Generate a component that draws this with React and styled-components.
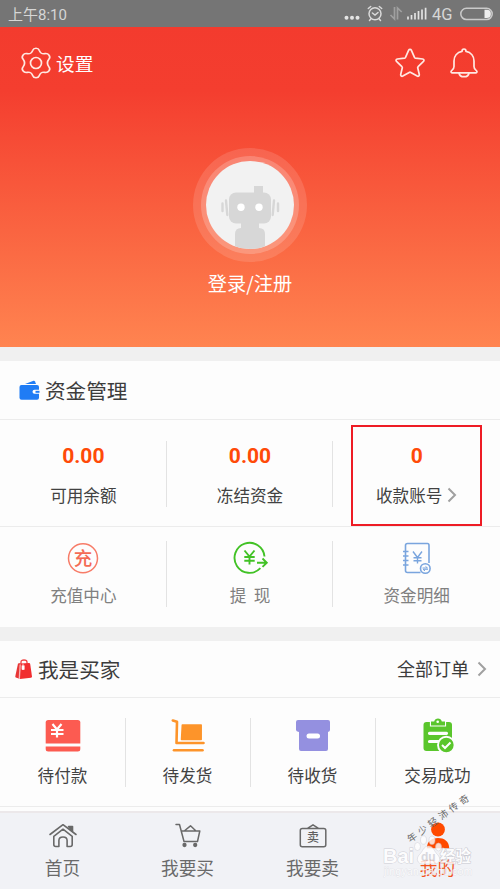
import React from 'react';
import styled, {createGlobalStyle} from 'styled-components';

const GlobalStyle = createGlobalStyle`
  * {
    box-sizing: border-box;
  }
  body {
    margin: 0;
    background: #fdfdfd;
    font-family: 'Noto Sans CJK SC', 'Noto Sans', sans-serif;
  }
  svg {
    display: block;
    flex: none;
    overflow: visible;
  }
`;

const Page = styled.div`
  position: relative;
  display: flex;
  flex-direction: column;
  width: 500px;
  height: 889px;
  overflow: hidden;
  background: #fdfdfd;
`;
const StatusBar = styled.div`
  display: flex;
  justify-content: space-between;
  align-items: center;
  flex: none;
  height: 27px;
  padding: 2px 6px 0 8px;
  background: #757575;
  color: #d6d6d6;
  line-height: 24px;
`;
const Clock = styled.span`
  font-family: Roboto, 'Noto Sans CJK SC', sans-serif;
  font-size: 15px;
  font-weight: 400;
`;
const StatusIcons = styled.div`
  display: flex;
  align-items: center;
`;
const Network = styled.span`
  width: 23px;
  margin: 0 5px 0 3px;
  font-family: Roboto, sans-serif;
  font-size: 16.5px;
`;
const Hero = styled.header`
  display: flex;
  flex-direction: column;
  align-items: center;
  flex: none;
  height: 320px;
  padding: 19px 20px 0;
  background: linear-gradient(#f33b2e 0%, #f43e2f 20%, #ff8450 100%);
  color: #fff;
`;
const HeroBar = styled.div`
  display: flex;
  align-items: center;
  width: 100%;
  height: 34px;
`;
const Settings = styled.span`
  flex: 1;
  margin-left: 4px;
  font-size: 18.7px;
  line-height: 28px;
`;
const HeroIcons = styled.div`
  display: flex;
  align-items: center;
  gap: 22px;
`;
const AvatarRing = styled.div`
  display: flex;
  align-items: center;
  justify-content: center;
  width: ${({$size}) => $size}px;
  height: ${({$size}) => $size}px;
  border-radius: 50%;
  background: rgba(255, 255, 255, ${({$alpha}) => $alpha});
`;
const Avatar = styled.div`
  width: 88px;
  height: 88px;
  border-radius: 50%;
  overflow: hidden;
  background: #f2f2f2;
`;
const AvatarSlot = styled.div`
  margin-top: 68px;
`;
const Login = styled.span`
  margin-top: 8px;
  font-size: 19.2px;
  line-height: 26px;
`;
const Gap = styled.div`
  flex: none;
  height: 14px;
  background: #f0f0f0;
`;
const SectionTitle = styled.div`
  display: flex;
  align-items: center;
  flex: none;
  height: ${({$height}) => $height}px;
  padding: 0 13px 0 ${({$left}) => $left}px;
  border-bottom: 1px solid #ececec;
  color: #3c3c3c;
`;
const Heading = styled.h2`
  flex: 1;
  margin: 0 0 0 5px;
  font-size: 20.6px;
  font-weight: 400;
  line-height: 30px;
`;
const MoreLink = styled.span`
  margin: -3px 8px 0 0;
  font-size: 18px;
  line-height: 28px;
`;
const Row = styled.div`
  display: grid;
  grid-template-columns: repeat(${({$columns}) => $columns}, 1fr);
  flex: none;
  height: ${({$height}) => $height}px;
  padding: ${({$padding}) => $padding};
  border-bottom: ${({$line}) => ($line ? '1px solid #ececec' : 'none')};
`;
const Cell = styled.div`
  display: flex;
  flex-direction: column;
  align-items: center;
  box-shadow: -1px 0 #e3e3e3;

  &:first-child {
    box-shadow: none;
  }
`;
const OrderCell = styled(Cell)`
  box-shadow: inset 1px 0 #e3e3e3;
`;
const Amount = styled.span`
  margin-top: 2px;
  color: #ff4a08;
  font-family: Roboto, sans-serif;
  font-size: 21px;
  font-weight: 700;
  line-height: 27px;
`;
const Label = styled.span`
  display: flex;
  align-items: center;
  gap: 5px;
  margin-top: ${({$top}) => $top}px;
  color: ${({$soft}) => ($soft ? '#808080' : '#424242')};
  font-size: 16.6px;
  line-height: 24px;
  white-space: pre;
`;
const Highlight = styled.div`
  position: absolute;
  left: 351px;
  top: 425px;
  width: 131px;
  height: 101px;
  border: 2.5px solid #ee1c25;
`;
const TabBar = styled.nav`
  display: grid;
  grid-template-columns: repeat(4, 1fr);
  flex: none;
  height: 78px;
  margin-top: 4px;
  border-top: 2px solid #ece8ea;
  background: #f1f2f6;
`;
const Tab = styled.div`
  display: flex;
  flex-direction: column;
  align-items: center;
  padding-top: 10px;
  color: ${({$active}) => ($active ? '#f4521c' : '#6a6a6a')};
  font-size: 17.7px;
  line-height: 26px;

  svg {
    margin-bottom: 5px;
  }
`;
const BrandMark = styled.div`
  position: absolute;
  left: 383px;
  top: 832px;
  opacity: 0.8;
`;
const Signature = styled.div`
  position: absolute;
  left: 400px;
  top: 808px;
  width: 84px;
  color: #666;
  font-size: 9.5px;
  letter-spacing: 3.3px;
  line-height: 14px;
  white-space: nowrap;
  transform: rotate(-36deg);
`;

const Chevron = () => (
  <svg width="10" height="16" viewBox="0 0 10 16" fill="none" stroke="#a0a0a0" strokeWidth="2">
    <path d="M1.500 1.500 8 8l-6.500 6.500" />
  </svg>
);

const StatusGlyphs = () => (
  <svg width="45" height="20" viewBox="0 0 45 20" fill="none">
    <g fill="#e4e4e4">
      <circle cx="2.500" cy="12.800" r="2" />
      <circle cx="8" cy="12.800" r="2" />
      <circle cx="13.500" cy="12.800" r="2" />
    </g>
    <g stroke="#dadada" strokeWidth="1.500" strokeLinecap="round">
      <circle cx="31" cy="8.800" r="6" />
      <path d="M28.400 8 31 10l3-2.500M24.300 3.500l2.400-2M37.700 3.500l-2.400-2M27 13.800l-1.500 1.700M35 13.800l1.500 1.700" />
    </g>
  </svg>
);

const SignalGlyphs = () => (
  <svg width="40" height="20" viewBox="0 0 40 20">
    <g fill="none" stroke="#a0a0a0" strokeWidth="1.700">
      <path d="M5.500 2v12L1.500 10M8.500 14.500V3l4.200 4" />
    </g>
    <path
      d="M19 14.500v-3M22.500 14.500v-4.500M26 14.500V8M29.500 14.500V6M33 14.500V4.500M36.600 14.500V2.800"
      stroke="#e2e2e2"
      strokeWidth="1.700"
    />
  </svg>
);

const Battery = () => (
  <svg width="34" height="13" viewBox="0 0 34 13">
    <rect x=".8" y=".3" width="31.400" height="11.200" rx="5.600" fill="none" stroke="#cacaca" strokeWidth="1.500" />
    <path d="M24.500 1.800h2.300a4.100 4.100 0 0 1 0 8.200h-2.300z" fill="#eee" />
  </svg>
);

const GearIcon = () => (
  <svg width="32" height="32" viewBox="0 0 32 32" fill="none" stroke="#ffe8e2" strokeWidth="1.700">
    <path
      d="M12.800 3.200C13.700.6 18.300.6 19.200 3.200C20.500 6.500 21.800 7.200 25 6.600C28.500 6 31 9.600 29 12C26.800 14.800 26.800 17.200 29 20C31 22.400 28.500 26 25 25.400C21.800 24.800 20.500 25.500 19.200 28.800C18.300 31.400 13.700 31.400 12.800 28.800C11.500 25.500 10.200 24.800 7 25.400C3.500 26 1 22.400 3 20C5.200 17.200 5.200 14.800 3 12C1 9.600 3.500 6 7 6.600C10.200 7.200 11.500 6.500 12.800 3.200Z"
      strokeLinejoin="round"
    />
    <circle cx="16" cy="16" r="5.500" />
  </svg>
);

const StarIcon = () => (
  <svg width="32" height="32" viewBox="0 0 32 32" fill="none" stroke="#ffe8e2" strokeWidth="1.700" strokeLinejoin="round">
    <path d="M14.700 3.200c.5-1.100 2.100-1.100 2.600 0l3.200 7.200c.2.400.5.600.9.700l7.300.9c1.300.2 1.700 1.600.8 2.400l-5.400 5.200c-.4.300-.5.700-.4 1.200l1.600 6.700c.3 1.300-1 2.200-2.100 1.600l-6.400-3.700c-.5-.3-1.100-.3-1.600 0l-6.400 3.700c-1.100.6-2.400-.3-2.100-1.600l1.600-6.700c.1-.5 0-.9-.4-1.200l-5.400-5.200c-.9-.8-.5-2.200.8-2.400l7.300-.9c.4-.1.700-.3.900-.7z" />
  </svg>
);

const BellIcon = () => (
  <svg width="32" height="32" viewBox="0 0 32 32" fill="none" stroke="#ffe8e2" strokeWidth="1.700" strokeLinejoin="round">
    <path d="M14 4.400c0-3.200 4-3.200 4 0c5 1 8 5 8 9.600v5.500c0 2.200 1.200 2.800 2.700 4.500c.8 1-.1 1.800-1 1.800H4.300c-.9 0-1.800-.8-1-1.800C4.800 22.300 6 21.700 6 19.500V14c0-4.600 3-8.600 8-9.600Z" />
    <path d="M11 25.800c.5 5.200 9.500 5.200 10 0" />
  </svg>
);

const Robot = () => (
  <svg width="88" height="88" viewBox="0 0 88 88">
    <g fill="#d7d7d7">
      <path d="M48 25h9v8h-9z" />
      <rect x="23" y="31.500" width="42" height="31" rx="7" />
      <path d="M35 60h18v8H35z" />
      <path d="M29 90V73q0-6 6-6h18q6 0 6 6v17z" />
    </g>
    <path
      d="M20 39.500 21.300 54M16.500 42.500v7.500M68 39.500 66.700 54M72 42.500v7.500"
      stroke="#d7d7d7"
      strokeWidth="2.400"
      strokeLinecap="round"
    />
    <circle cx="35" cy="46.300" r="3.700" fill="#fff" />
    <circle cx="53" cy="46.300" r="3.700" fill="#fff" />
  </svg>
);

const WalletIcon = () => (
  <svg width="21" height="20" viewBox="0 0 21 20" fill="#1f7cf5">
    <path d="M6 4 14.500.8q1-.3 1.500.6l1 2.600z" />
    <rect x=".5" y="5" width="19.500" height="14.800" rx="2" />
    <path d="M20.500 9.800h-5a2 2 0 0 0 0 4h5z" fill="#fff" />
    <path d="M16.500 10.800h4v2h-4z" />
  </svg>
);

const BagIcon = () => (
  <svg width="18" height="20" viewBox="0 0 18 20">
    <path d="M6 5.500V3q0-2 3-2t3 2v2" fill="none" stroke="#ef4545" strokeWidth="1.300" />
    <path d="M3 4.500 5.500 4 4.500 19.800.8 18.500q-.7-.3-.5-1.300z" fill="#e83636" />
    <path d="M5.500 4.500 14 4q1 0 1.200 1L17 17.500q.1 1-1 1.200L5 20z" fill="#f12e30" />
    <path d="M5 5.500 4.200 19" stroke="#fff" strokeWidth=".6" />
    <path d="M7 6.500v4h2.200v-4M8 4.800V7" fill="#fff" stroke="#fff" strokeWidth=".7" />
  </svg>
);

const RechargeIcon = () => (
  <svg width="32" height="32" viewBox="0 0 32 32">
    <circle cx="16" cy="16.300" r="14.500" fill="none" stroke="#f77c68" strokeWidth="1.500" />
    <text x="16" y="22.800" textAnchor="middle" fontSize="18.500" fontWeight="500" fill="#f46b55">
      充
    </text>
  </svg>
);

const WithdrawIcon = () => (
  <svg width="36" height="34" viewBox="0 0 36 34" fill="none" stroke="#42c226" strokeWidth="1.900">
    <path d="M32.500 15.500A15 15 0 1 0 28.400 27.200" />
    <path d="M25 21.700h9.500M30.500 17.500l4.300 4.200-4.300 4.200" />
    <path d="M12.500 9.500 17.500 15.500 22.500 9.500M17.500 15.500V23.500M12.300 16h10.400M12.300 19.700h10.400" />
  </svg>
);

const LedgerIcon = () => (
  <svg width="28" height="32" viewBox="0 0 28 32" fill="none" stroke="#7aa5de" strokeWidth="1.600">
    <path d="M17.500 30.500H4.500q-2 0-2-2v-25q0-2 2-2h20q1.500 0 1.500 2V21" />
    <path d="M0 9.500h5.500M0 14h5.500M0 18.500h5.500M0 23h5.500" strokeWidth="1.500" />
    <path d="M10 9.500l4.500 6 4.500-6M14.500 15.500v6M10.500 15.700h8M10.500 18.700h8" strokeWidth="1.400" />
    <circle cx="22.300" cy="26.500" r="4.800" />
    <path d="M19.500 26h5l-2-1.600M25 27.300h-5l2 1.600" strokeWidth="1" />
  </svg>
);

const CardIcon = () => (
  <svg width="36" height="34" viewBox="0 0 36 34" fill="#fc5b51">
    <path d="M.7 24.500V3.500q0-2.500 2.500-2.500h29.600q2.500 0 2.500 2.500v21z" />
    <path d="M.7 27.500h34.600v2.500q0 2.500-2.500 2.500H3.200q-2.500 0-2.500-2.500z" />
    <path
      d="M7.500 5 12 10.500 16.500 5M12 10.500V18.500M6 11h12.500M6 15h12.500"
      fill="none"
      stroke="#fff"
      strokeWidth="2.200"
    />
  </svg>
);

const TrolleyIcon = () => (
  <svg width="34" height="34" viewBox="0 0 34 34" fill="none" stroke="#fd942a" strokeWidth="2.600" strokeLinecap="round" strokeLinejoin="round">
    <path d="M1.800 1.500 6 2.800 5.500 24H32.500" />
    <path d="M3 31.200h28.500" />
    <path d="M11.300 6h18.900v14.500H10.500z" fill="#fd942a" strokeWidth="1.500" />
  </svg>
);

const BoxIcon = () => (
  <svg width="34" height="34" viewBox="0 0 34 34">
    <path
      d="M2 1h30q2 0 2 2v8q0 1.500-2 2v17q0 2-2 2H5q-2 0-2-2V13q-3-.5-3-2V3q0-2 2-2z"
      fill="#9490e0"
    />
    <rect x="10.500" y="14.500" width="13.500" height="5" rx="2.500" fill="#fff" />
  </svg>
);

const DoneIcon = () => (
  <svg width="32" height="36" viewBox="0 0 32 36">
    <rect x="1.500" y="4" width="28.500" height="29" rx="3" fill="#5ac62c" />
    <path
      d="M9 3.500h3.200c.6-4 7-4 7.600 0H23v4H9z"
      fill="#5ac62c"
      stroke="#fdfdfd"
      strokeWidth="2.200"
      paintOrder="stroke"
    />
    <circle cx="15.700" cy="3.700" r="1.300" fill="#fff" />
    <path d="M7.500 15.300h17M7.500 23.500h9" stroke="#fdfdfd" strokeWidth="3.200" strokeLinecap="round" />
    <circle cx="24.300" cy="27" r="8.300" fill="#5ac62c" stroke="#fdfdfd" strokeWidth="1.900" />
    <path d="m20 27 3 3 5.500-5.500" fill="none" stroke="#fff" strokeWidth="2" />
  </svg>
);

const HomeIcon = () => (
  <svg width="28" height="26" viewBox="0 0 28 26" fill="none" stroke="#696969" strokeWidth="1.600" strokeLinejoin="round" strokeLinecap="round">
    <path d="M1 11.500 14 1.700 27 11.500" />
    <path d="M19.500 3.500h4v5z" fill="#696969" />
    <path d="M4.800 13.300V21.500q0 2 2 2h3.100v-6q0-3.500 4.100-3.500t4.100 3.500v6h3.100q2 0 2-2v-8.200L14 6.200z" />
  </svg>
);

const CartIcon = () => (
  <svg width="26" height="26" viewBox="0 0 26 26" fill="none" stroke="#696969" strokeWidth="1.500" strokeLinejoin="round" strokeLinecap="round">
    <path d="M1 1.500h3.500L9 18.500h13.500L24.800 8H6.500M9.800 7.500l5.700-4.700 5 4.700" />
    <circle cx="9.500" cy="22" r="1.400" fill="#696969" />
    <circle cx="20.200" cy="22" r="1.400" fill="#696969" />
  </svg>
);

const SellIcon = () => (
  <svg width="28" height="26" viewBox="0 0 28 26">
    <path
      d="M3.300 5.500h21.500q2 0 2 2v14.300q0 2-2 2H3.300q-2 0-2-2V7.500q0-2 2-2zM8.500 5.300 14 1.800l5.500 3.500"
      fill="none"
      stroke="#696969"
      strokeWidth="1.500"
    />
    <text x="14" y="18.800" textAnchor="middle" fontSize="12" fontWeight="500" fill="#606060">
      卖
    </text>
  </svg>
);

const MineIcon = () => (
  <svg width="24" height="26" viewBox="0 0 24 26" fill="#ff4a00">
    <circle cx="12" cy="6.500" r="6.900" />
    <path d="M.8 25.200C1 18 6 15 12 15s11 3 11.200 10.200z" />
  </svg>
);

const BaiduMark = () => (
  <svg width="94" height="50" viewBox="0 0 94 50">
    <g fill="#fff" stroke="#cfcfd6" strokeWidth=".6">
      <ellipse cx="34.500" cy="14.500" rx="3" ry="4" />
      <ellipse cx="40.500" cy="8" rx="3" ry="4.200" />
      <ellipse cx="49" cy="8.300" rx="3" ry="4.200" />
      <ellipse cx="55.500" cy="15" rx="3" ry="4" />
      <path d="M45.500 14c5 0 6 6 9 8.500c4 4 2 9.500-3 9.500h-12c-5 0-7-5.500-3-9.500c3-2.500 4-8.500 9-8.500z" />
    </g>
    <text
      x="0"
      y="31"
      fontFamily="Liberation Sans, sans-serif"
      fontSize="20"
      fontWeight="700"
      fill="#fff"
      stroke="#c4c4cc"
      strokeWidth=".9"
      paintOrder="stroke"
      textLength="31"
    >
      Bai
    </text>
    <text x="38" y="29" fontFamily="Liberation Sans, sans-serif" fontSize="12" fontWeight="700" fill="#d2d2d8">
      du
    </text>
    <text x="57" y="30" fontSize="15.500" fontWeight="700" fill="#fff" stroke="#c0c0c8" strokeWidth="1" paintOrder="stroke">
      经验
    </text>
    <text
      x="1"
      y="43"
      fontFamily="Liberation Sans, sans-serif"
      fontSize="10"
      fill="#fff"
      stroke="#d6d6dc"
      strokeWidth=".6"
      paintOrder="stroke"
      textLength="88"
    >
      jingyan.baidu.com
    </text>
  </svg>
);

const services = [
  {label: '充值中心', Icon: RechargeIcon},
  {label: '提  现', Icon: WithdrawIcon},
  {label: '资金明细', Icon: LedgerIcon},
];

const orders = [
  {label: '待付款', Icon: CardIcon},
  {label: '待发货', Icon: TrolleyIcon},
  {label: '待收货', Icon: BoxIcon},
  {label: '交易成功', Icon: DoneIcon},
];

const tabs = [
  {label: '首页', Icon: HomeIcon},
  {label: '我要买', Icon: CartIcon},
  {label: '我要卖', Icon: SellIcon},
  {label: '我的', Icon: MineIcon, active: true},
];

const IconSlot = styled.div`
  display: flex;
  align-items: center;
  height: ${({$height}) => $height}px;
`;

function App() {
  return (
    <Page>
      <GlobalStyle />
      <StatusBar>
        <Clock>上午8:10</Clock>
        <StatusIcons>
          <StatusGlyphs />
          <SignalGlyphs />
          <Network>4G</Network>
          <Battery />
        </StatusIcons>
      </StatusBar>
      <Hero>
        <HeroBar>
          <GearIcon />
          <Settings>设置</Settings>
          <HeroIcons>
            <StarIcon />
            <BellIcon />
          </HeroIcons>
        </HeroBar>
        <AvatarSlot>
          <AvatarRing $size={114} $alpha={0.13}>
            <AvatarRing $size={98} $alpha={0.2}>
              <Avatar>
                <Robot />
              </Avatar>
            </AvatarRing>
          </AvatarRing>
        </AvatarSlot>
        <Login>登录/注册</Login>
      </Hero>
      <Gap />
      <SectionTitle $height={59} $left={19}>
        <WalletIcon />
        <Heading>资金管理</Heading>
      </SectionTitle>
      <Row $columns={3} $height={107} $padding="21px 0" $line>
        <Cell>
          <Amount>0.00</Amount>
          <Label $top={13}>可用余额</Label>
        </Cell>
        <Cell>
          <Amount>0.00</Amount>
          <Label $top={13}>冻结资金</Label>
        </Cell>
        <Cell>
          <Amount>0</Amount>
          <Label $top={13}>
            收款账号
            <Chevron />
          </Label>
        </Cell>
      </Row>
      <Row $columns={3} $height={100} $padding="14px 0 21px">
        {services.map(({label, Icon}) => (
          <Cell key={label}>
            <IconSlot $height={34}>
              <Icon />
            </IconSlot>
            <Label $top={8} $soft>
              {label}
            </Label>
          </Cell>
        ))}
      </Row>
      <Gap />
      <SectionTitle $height={57} $left={15}>
        <BagIcon />
        <Heading>我是买家</Heading>
        <MoreLink>全部订单</MoreLink>
        <Chevron />
      </SectionTitle>
      <Row $columns={4} $height={109} $padding="20px 0" $line>
        {orders.map(({label, Icon}) => (
          <OrderCell key={label}>
            <IconSlot $height={36}>
              <Icon />
            </IconSlot>
            <Label $top={9}>{label}</Label>
          </OrderCell>
        ))}
      </Row>
      <TabBar>
        {tabs.map(({label, Icon, active}) => (
          <Tab key={label} $active={active}>
            <Icon />
            {label}
          </Tab>
        ))}
      </TabBar>
      <Highlight />
      <BrandMark>
        <BaiduMark />
      </BrandMark>
      <Signature>年少轻沛传奇</Signature>
    </Page>
  );
}

export default App;
